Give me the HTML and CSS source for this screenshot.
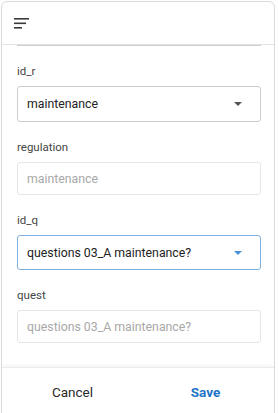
FILE: index.html
```html
<!DOCTYPE html>
<html lang="en">
<head>
    <meta charset="UTF-8">
    <meta name="viewport" content="width=device-width, initial-scale=1.0">
    <title>Edit record</title>
    <link rel="stylesheet" href="styles.css">
</head>
<body>
    <div class="frame">
        <div class="header">
            <svg class="sort-icon" width="16" height="12" viewBox="0 0 16 12">
                <rect x="0" y="0" width="15" height="1.6" fill="#3a3a3a"/>
                <rect x="0" y="4.5" width="12" height="1.6" fill="#3a3a3a"/>
                <rect x="0" y="9" width="8" height="1.6" fill="#3a3a3a"/>
            </svg>
        </div>

        <div class="content">
            <div class="scrolled-edge"></div>

            <label class="field-label">id_r</label>
            <div class="select">
                <span>maintenance</span>
                <span class="arrow"></span>
            </div>

            <label class="field-label">regulation</label>
            <div class="input">maintenance</div>

            <label class="field-label">id_q</label>
            <div class="select focused">
                <span>questions 03_A maintenance?</span>
                <span class="arrow"></span>
            </div>

            <label class="field-label">quest</label>
            <div class="input">questions 03_A maintenance?</div>
        </div>

        <div class="footer">
            <button class="btn cancel">Cancel</button>
            <button class="btn save">Save</button>
        </div>
    </div>
</body>
</html>
```

FILE: styles.css
```css
* {
    box-sizing: border-box;
    margin: 0;
    padding: 0;
}
body {
    background: #fff;
    font-family: Roboto, 'Noto Sans', sans-serif;
    color: #222;
    height: 413px;
    overflow: hidden;
}
.frame {
    margin: 1px 0 0 1px;
    width: 274px;
    height: 420px;
    border: 1px solid #dadada;
    border-radius: 6px 6px 0 0;
    display: flex;
    flex-direction: column;
    overflow: hidden;
}
.header {
    height: 43px;
    flex-shrink: 0;
    border-bottom: 1px solid #e2e2e2;
    display: flex;
    align-items: center;
    padding-left: 12px;
}
.sort-icon {
    display: block;
    margin-top: 1px;
}
.content {
    height: 322px;
    flex-shrink: 0;
    padding: 0 13px 0 15px;
    display: flex;
    flex-direction: column;
    overflow: hidden;
}
.scrolled-edge {
    height: 2px;
    border-bottom: 1px solid #cfcfcf;
    margin-top: -1px;
}
.field-label {
    display: block;
    font-size: 11.5px;
    line-height: 16px;
    color: #444;
    margin: 17px 0 7px 0;
}
.select {
    height: 36px;
    border: 1px solid #cccccc;
    border-radius: 3px;
    display: flex;
    align-items: center;
    justify-content: space-between;
    padding: 0 18px 0 9px;
    font-size: 12.3px;
    color: #222;
}
.select.focused {
    border-color: #7eb2e3;
    height: 35px;
}
.arrow {
    width: 0;
    height: 0;
    border-left: 4.5px solid transparent;
    border-right: 4.5px solid transparent;
    border-top: 4.5px solid #555;
}
.focused .arrow {
    border-top-color: #4a90d6;
}
.input {
    height: 33px;
    border: 1px solid #e6e6e6;
    border-radius: 3px;
    display: flex;
    align-items: center;
    padding-left: 9px;
    font-size: 12.3px;
    color: #a8a8a8;
}
.footer {
    flex: 1;
    display: flex;
    align-items: flex-start;
    border-top: 1px solid #ececec;
    box-shadow: 0 -2px 3px rgba(0, 0, 0, 0.04);
}
.btn {
    flex: 1;
    background: none;
    border: none;
    font-family: Roboto, 'Noto Sans', sans-serif;
    font-size: 13.5px;
    height: 47px;
    cursor: pointer;
}
.cancel {
    color: #2a2a2a;
    padding-left: 4px;
}
.save {
    color: #1e74c6;
    font-weight: 700;
    padding-right: 2px;
}
```
